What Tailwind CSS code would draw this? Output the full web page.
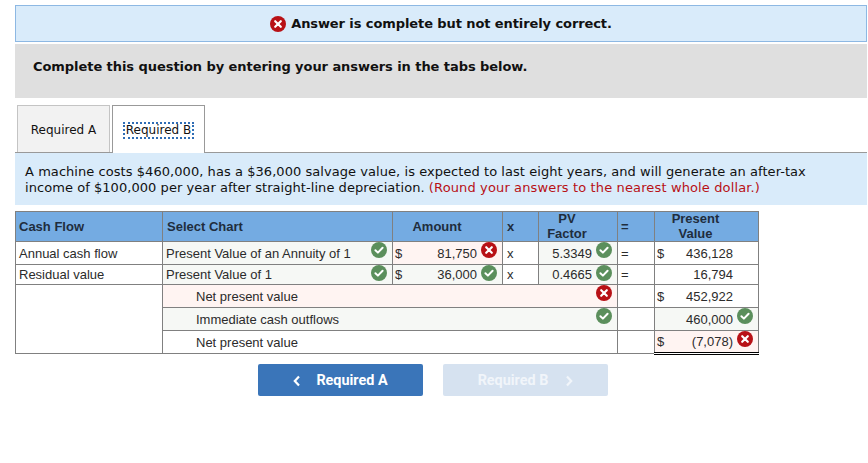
<!DOCTYPE html>
<html lang="en">
<head>
<meta charset="UTF-8">
<script src="https://cdn.jsdelivr.net/npm/@tailwindcss/browser@4"></script>
<title>Answer</title>
</head>
<body class="bg-white font-['DejaVu_Sans',sans-serif] text-[13px] text-[#111] overflow-hidden">
<div class="w-[852px] ml-[15px] pt-[5px]">
  <!-- banner -->
  <div class="h-[37px] border border-[#8db8e3] bg-[#d9ebfa] flex items-center justify-center gap-[5px] font-bold tracking-[-0.09px]">
    <svg class="w-4 h-4" viewBox="0 0 16 16"><circle cx="8" cy="8" r="8" fill="#b81116"/><path d="M5.2 5.2l5.6 5.6M10.8 5.2l-5.6 5.6" stroke="#fff" stroke-width="2.2" stroke-linecap="round"/></svg>
    <span>Answer is complete but not entirely correct.</span>
  </div>
  <div class="h-[54px] mt-[2px] bg-[#dfdfdf] pl-[18px] pt-[15px] font-bold leading-[16px] tracking-[-0.06px]">Complete this question by entering your answers in the tabs below.</div>

  <!-- tabs -->
  <div class="flex mt-[7px] pl-[2px] gap-[2px] h-[47px] text-[12px]">
    <div class="w-[93px] pt-[2px] border border-b-0 border-[#c4c4c4] bg-[#f2f2f2] flex items-center justify-center">Required A</div>
    <div class="w-[93px] h-[48px] pt-[1px] border border-b-0 border-[#999] bg-white flex items-center justify-center relative z-10">
      <span class="border-2 border-dotted border-[#2f6db5] leading-[13px] px-px">Required B</span>
    </div>
  </div>
  <div class="border-t border-[#999] bg-[#d9ebfa] h-[53px] pl-[10px] pt-[11px] leading-[16px] tracking-[0.055px]">
    A machine costs $460,000, has a $36,000 salvage value, is expected to last eight years, and will generate an after-tax<br>
    income of $100,000 per year after straight-line depreciation. <span class="text-[#b81116] tracking-[0.13px]">(Round your answers to the nearest whole dollar.)</span>
  </div>

  <!-- table -->
  <table class="mt-[6px] w-[743px] table-fixed border-collapse font-['Liberation_Sans',sans-serif] text-[13px] text-[#2b2b2b] leading-[14px]">
    <colgroup>
      <col class="w-[147px]"><col class="w-[230px]"><col class="w-[110px]"><col class="w-[36px]"><col class="w-[79px]"><col class="w-[37px]"><col class="w-[104px]">
    </colgroup>
    <thead>
      <tr class="h-[30px] bg-[#74abe2] font-bold text-[#1f2d3d]">
        <th class="border border-[#808080] text-left font-bold pl-[3px]">Cash Flow</th>
        <th class="border border-[#808080] text-left font-bold pl-[4px]">Select Chart</th>
        <th class="border border-[#808080] font-bold pr-[21px]">Amount</th>
        <th class="border border-[#808080] text-left font-bold pl-[4px]">x</th>
        <th class="border border-[#808080] font-bold leading-[14.5px] pr-[22px]">PV<br>Factor</th>
        <th class="border border-[#808080] text-left font-bold pl-[3px]">=</th>
        <th class="border border-[#808080] font-bold leading-[14.5px] pr-[22px]">Present<br>Value</th>
      </tr>
    </thead>
    <tbody>
      <tr class="h-[23px] [&>td]:pt-[1px]">
        <td class="border border-[#808080] pl-[3px]">Annual cash flow</td>
        <td class="border border-[#808080] bg-[#f6f8f5] pl-[3px] relative">Present Value of an Annuity of 1
          <svg class="w-4 h-4 absolute right-[5px] top-0" viewBox="0 0 16 16"><circle cx="8" cy="8" r="8" fill="#5b8f5c"/><path d="M4.4 8.2l2.5 2.4 4.7-4.8" fill="none" stroke="#fff" stroke-width="2" stroke-linecap="round" stroke-linejoin="round"/></svg>
        </td>
        <td class="border border-[#808080] bg-[#fff4f2] relative pl-[2px]">
          <div class="flex justify-between pr-[25px]"><span>$</span><span>81,750</span></div>
          <svg class="w-4 h-4 absolute right-[5px] top-0" viewBox="0 0 16 16"><circle cx="8" cy="8" r="8" fill="#b81116"/><path d="M5.2 5.2l5.6 5.6M10.8 5.2l-5.6 5.6" stroke="#fff" stroke-width="2.2" stroke-linecap="round"/></svg>
        </td>
        <td class="border border-[#808080] pl-[4px]">x</td>
        <td class="border border-[#808080] bg-[#f6f8f5] relative text-right pr-[25px]">5.3349
          <svg class="w-4 h-4 absolute right-[5px] top-0" viewBox="0 0 16 16"><circle cx="8" cy="8" r="8" fill="#5b8f5c"/><path d="M4.4 8.2l2.5 2.4 4.7-4.8" fill="none" stroke="#fff" stroke-width="2" stroke-linecap="round" stroke-linejoin="round"/></svg>
        </td>
        <td class="border border-[#808080] pl-[3px]">=</td>
        <td class="border border-[#808080] pl-[2px]"><div class="flex justify-between pr-[25px]"><span>$</span><span>436,128</span></div></td>
      </tr>
      <tr class="h-[20px]">
        <td class="border border-[#808080] pl-[3px]">Residual value</td>
        <td class="border border-[#808080] bg-[#f6f8f5] pl-[3px] relative">Present Value of 1
          <svg class="w-4 h-4 absolute right-[5px] top-0" viewBox="0 0 16 16"><circle cx="8" cy="8" r="8" fill="#5b8f5c"/><path d="M4.4 8.2l2.5 2.4 4.7-4.8" fill="none" stroke="#fff" stroke-width="2" stroke-linecap="round" stroke-linejoin="round"/></svg>
        </td>
        <td class="border border-[#808080] bg-[#f6f8f5] relative pl-[2px]">
          <div class="flex justify-between pr-[25px]"><span>$</span><span>36,000</span></div>
          <svg class="w-4 h-4 absolute right-[5px] top-0" viewBox="0 0 16 16"><circle cx="8" cy="8" r="8" fill="#5b8f5c"/><path d="M4.4 8.2l2.5 2.4 4.7-4.8" fill="none" stroke="#fff" stroke-width="2" stroke-linecap="round" stroke-linejoin="round"/></svg>
        </td>
        <td class="border border-[#808080] pl-[4px]">x</td>
        <td class="border border-[#808080] bg-[#f6f8f5] relative text-right pr-[25px]">0.4665
          <svg class="w-4 h-4 absolute right-[5px] top-0" viewBox="0 0 16 16"><circle cx="8" cy="8" r="8" fill="#5b8f5c"/><path d="M4.4 8.2l2.5 2.4 4.7-4.8" fill="none" stroke="#fff" stroke-width="2" stroke-linecap="round" stroke-linejoin="round"/></svg>
        </td>
        <td class="border border-[#808080] pl-[3px]">=</td>
        <td class="border border-[#808080] text-right pr-[25px]">16,794</td>
      </tr>
      <tr class="h-[23px] [&>td]:pt-[1px]">
        <td rowspan="3" class="border border-[#808080]"></td>
        <td colspan="4" class="border border-[#808080] bg-[#fff4f2] pl-[33px] relative">Net present value
          <svg class="w-4 h-4 absolute right-[5px] top-0" viewBox="0 0 16 16"><circle cx="8" cy="8" r="8" fill="#b81116"/><path d="M5.2 5.2l5.6 5.6M10.8 5.2l-5.6 5.6" stroke="#fff" stroke-width="2.2" stroke-linecap="round"/></svg>
        </td>
        <td class="border border-[#808080]"></td>
        <td class="border border-[#808080] border-t-black pl-[2px]"><div class="flex justify-between pr-[25px]"><span>$</span><span>452,922</span></div></td>
      </tr>
      <tr class="h-[23px] [&>td]:pt-[1px]">
        <td colspan="4" class="border border-[#808080] bg-[#f6f8f5] pl-[33px] relative">Immediate cash outflows
          <svg class="w-4 h-4 absolute right-[5px] top-0" viewBox="0 0 16 16"><circle cx="8" cy="8" r="8" fill="#5b8f5c"/><path d="M4.4 8.2l2.5 2.4 4.7-4.8" fill="none" stroke="#fff" stroke-width="2" stroke-linecap="round" stroke-linejoin="round"/></svg>
        </td>
        <td class="border border-[#808080]"></td>
        <td class="border border-[#808080] bg-[#f6f8f5] text-right pr-[25px] relative">460,000
          <svg class="w-4 h-4 absolute right-[5px] top-0" viewBox="0 0 16 16"><circle cx="8" cy="8" r="8" fill="#5b8f5c"/><path d="M4.4 8.2l2.5 2.4 4.7-4.8" fill="none" stroke="#fff" stroke-width="2" stroke-linecap="round" stroke-linejoin="round"/></svg>
        </td>
      </tr>
      <tr class="h-[23px] [&>td]:pt-[1px]">
        <td colspan="4" class="border border-[#808080] pl-[33px]">Net present value</td>
        <td class="border border-[#808080]"></td>
        <td class="border border-[#808080] border-b-[3px] border-b-black border-double bg-[#fff4f2] pl-[2px] relative">
          <div class="flex justify-between pr-[25px]"><span>$</span><span>(7,078)</span></div>
          <svg class="w-4 h-4 absolute right-[5px] top-0" viewBox="0 0 16 16"><circle cx="8" cy="8" r="8" fill="#b81116"/><path d="M5.2 5.2l5.6 5.6M10.8 5.2l-5.6 5.6" stroke="#fff" stroke-width="2.2" stroke-linecap="round"/></svg>
        </td>
      </tr>
    </tbody>
  </table>

  <!-- nav buttons -->
  <div class="flex gap-[20px] mt-[9px] ml-[243px] font-['Roboto',sans-serif] font-bold text-[14.4px]">
    <button class="w-[165px] h-[32px] pt-[1px] bg-[#3a75b9] text-white rounded-[2px] flex items-center justify-center gap-[15px]">
      <svg class="w-[8px] h-[12px]" viewBox="0 0 8 12"><path d="M6 1.5L1.8 6 6 10.5" fill="none" stroke="#fff" stroke-width="2.2"/></svg>
      <span>Required A</span>
    </button>
    <button class="w-[165px] h-[32px] pt-[1px] bg-[#d6e2f0] text-[#f1f5fa] rounded-[2px] flex items-center justify-center gap-[17px]">
      <span>Required B</span>
      <svg class="w-[8px] h-[12px]" viewBox="0 0 8 12"><path d="M2 1.5L6.2 6 2 10.5" fill="none" stroke="#f1f5fa" stroke-width="2.2"/></svg>
    </button>
  </div>
</div>
</body>
</html>
